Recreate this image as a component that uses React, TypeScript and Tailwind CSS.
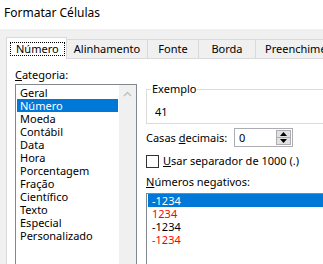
const font = { fontFamily: '"Noto Sans", "Liberation Sans", sans-serif' };

const categorias = [
  "Geral",
  "Número",
  "Moeda",
  "Contábil",
  "Data",
  "Hora",
  "Porcentagem",
  "Fração",
  "Científico",
  "Texto",
  "Especial",
  "Personalizado",
];

const negativos = [
  { t: "-1234", c: "text-black" },
  { t: "1234", c: "text-[#ff0000]" },
  { t: "-1234", c: "text-black" },
  { t: "-1234", c: "text-[#ff0000]" },
];

function Tabs() {
  return (
    <div className="flex items-end pl-[6px] pt-[8px]">
      <div className="relative z-10 -mb-px flex h-[22px] w-[61px] shrink-0 items-start border border-b-0 border-[#d9d9d9] bg-white pl-[3px] pt-[4px]">
        <span className="border border-dotted border-black px-[5px] leading-[12px]">Número</span>
      </div>
      <div className="flex h-[19px] w-[81px] shrink-0 items-center justify-center border-t border-r border-[#d9d9d9]">Alinhamento</div>
      <div className="flex h-[19px] w-[51px] shrink-0 items-center justify-center border-t border-r border-[#d9d9d9]">Fonte</div>
      <div className="flex h-[19px] w-[57px] shrink-0 items-center justify-center border-t border-r border-[#d9d9d9]">Borda</div>
      <div className="flex h-[19px] w-[100px] shrink-0 items-center border-t border-[#d9d9d9] pl-[9px] whitespace-nowrap">Preenchimento</div>
    </div>
  );
}

function CategoryList() {
  return (
    <div className="shrink-0 pl-[8px] pt-[9px]">
      <div className="leading-[14px]">
        <span className="underline">C</span>ategoria:
      </div>
      <div className="mt-[2px] flex h-[200px] w-[122px] border border-[#828790] bg-white">
        <div className="flex-1 p-[1px]">
          {categorias.map((c) => (
            <div
              key={c}
              className={
                "h-[13px] pl-[3px] leading-[13px] " +
                (c === "Número" ? "bg-[#0078d7] text-white" : "text-black")
              }
            >
              {c}
            </div>
          ))}
        </div>
        <div className="flex w-[17px] justify-center bg-[#f0f0f0] pt-[6px]">
          <svg width="9" height="6" viewBox="0 0 9 6">
            <path d="M1 5 L4.5 1.5 L8 5" fill="none" stroke="#c0c0c0" strokeWidth="1.5" />
          </svg>
        </div>
      </div>
    </div>
  );
}

function Spin() {
  return (
    <div className="flex h-[19px] w-[59px] shrink-0 items-stretch border border-[#abadb3] bg-white">
      <div className="flex-1 pl-[4px] leading-[17px]">0</div>
      <div className="my-[1px] mr-[1px] flex w-[15px] flex-col">
        <div className="flex flex-1 items-center justify-center border border-[#adadad] bg-[#e1e1e1]">
          <svg width="7" height="4" viewBox="0 0 7 4">
            <path d="M0 4 L3.5 0 L7 4 Z" fill="#000" />
          </svg>
        </div>
        <div className="flex flex-1 items-center justify-center border border-t-0 border-[#adadad] bg-[#e1e1e1]">
          <svg width="7" height="4" viewBox="0 0 7 4">
            <path d="M0 0 L3.5 4 L7 0 Z" fill="#000" />
          </svg>
        </div>
      </div>
    </div>
  );
}

function RightSide() {
  return (
    <div className="ml-[9px] min-w-0 flex-1 whitespace-nowrap">
      <div className="relative mt-[30px] h-[35px] border border-r-0 border-[#dcdcdc] pl-[8px] pt-[15px] leading-[14px]">
        <span className="absolute -top-[8px] left-[4px] bg-white px-[1px] leading-[14px]">Exemplo</span>
        41
      </div>
      <div className="mt-[4px] flex items-center">
        <div className="w-[88px] shrink-0 leading-[14px]">
          Casas <span className="underline">d</span>ecimais:
        </div>
        <Spin />
      </div>
      <div className="mt-[7px] flex items-center">
        <div className="h-[13px] w-[13px] shrink-0 border border-[#333333] bg-white" />
        <div className="ml-[4px] leading-[14px]">
          <span className="underline">U</span>sar separador de 1000 (.)
        </div>
      </div>
      <div className="mt-[7px] leading-[14px]">
        <span className="underline">N</span>úmeros negativos:
      </div>
      <div className="mt-[4px] h-[100px] border border-r-0 border-[#828790] bg-white pl-[1px]">
        {negativos.map((n, i) => (
          <div
            key={i}
            className={
              "h-[13px] pl-[4px] leading-[13px] " + (i === 0 ? "bg-[#0078d7] text-white" : n.c)
            }
          >
            {n.t}
          </div>
        ))}
      </div>
    </div>
  );
}

export default function App() {
  return (
    <div className="flex h-[264px] w-[323px] flex-col overflow-hidden bg-[#f0f0f0] text-[11px] text-black" style={font}>
      <div className="h-[29px] shrink-0 bg-white pl-[4px] pt-[6px] text-[12px] leading-[14px]">Formatar Células</div>
      <Tabs />
      <div className="ml-[6px] flex flex-1 border-t border-l border-[#d9d9d9] bg-white">
        <CategoryList />
        <RightSide />
      </div>
    </div>
  );
}
